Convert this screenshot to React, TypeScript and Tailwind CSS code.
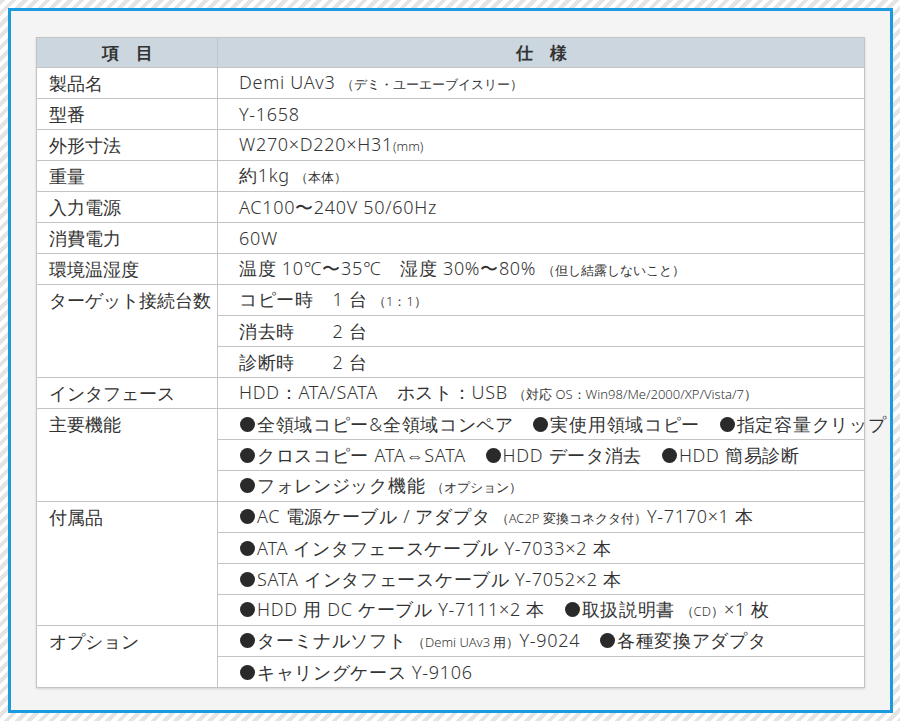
import React from "react";

const S = ({ children }: { children: React.ReactNode }) => (
  <span className="text-[13px] tracking-normal">{children}</span>
);
const B = () => (
  <span className="inline-block w-[15px] h-[15px] rounded-full bg-[#2a2a2a] ml-[1px] mr-[2px] align-[-1px]" />
);

type Row = { label?: string; span?: number; v: React.ReactNode };

const rows: Row[] = [
  { label: "製品名", v: <>Demi UAv3 <S>（デミ・ユーエーブイスリー）</S></> },
  { label: "型番", v: <>Y-1658</> },
  { label: "外形寸法", v: <>W270×D220×H31<S>(mm)</S></> },
  { label: "重量", v: <>約1kg <S>（本体）</S></> },
  { label: "入力電源", v: <>AC100〜240V 50/60Hz</> },
  { label: "消費電力", v: <>60W</> },
  { label: "環境温湿度", v: <>温度 10℃〜35℃　湿度 30%〜80% <S>（但し結露しないこと）</S></> },
  { label: "ターゲット接続台数", span: 3, v: <>コピー時　1 台 <S>（1：1）</S></> },
  { v: <>消去時　　2 台</> },
  { v: <>診断時　　2 台</> },
  { label: "インタフェース", v: <>HDD：ATA/SATA　ホスト：USB <S>（対応 OS：Win98/Me/2000/XP/Vista/7）</S></> },
  { label: "主要機能", span: 3, v: <><B />全領域コピー&amp;全領域コンペア　<B />実使用領域コピー　<B />指定容量クリップ</> },
  { v: <><B />クロスコピー ATA⇔SATA　<B />HDD データ消去　<B />HDD 簡易診断</> },
  { v: <><B />フォレンジック機能 <S>（オプション）</S></> },
  { label: "付属品", span: 4, v: <><B />AC 電源ケーブル / アダプタ <S>（AC2P 変換コネクタ付）</S>Y-7170×1 本</> },
  { v: <><B />ATA インタフェースケーブル Y-7033×2 本</> },
  { v: <><B />SATA インタフェースケーブル Y-7052×2 本</> },
  { v: <><B />HDD 用 DC ケーブル Y-7111×2 本　<B />取扱説明書 <S>（CD）</S>×1 枚</> },
  { label: "オプション", span: 2, v: <><B />ターミナルソフト <S>（Demi UAv3 用）</S>Y-9024　<B />各種変換アダプタ</> },
  { v: <><B />キャリングケース Y-9106</> },
];

export default function App() {
  return (
    <div className="w-[900px] h-[721px] p-[8px] bg-[repeating-linear-gradient(135deg,#e4e4e4_0px,#e4e4e4_4px,#ffffff_4px,#ffffff_8px)] [font-family:'Noto_Sans_CJK_JP','Noto_Sans',sans-serif] text-[#333]">
      <div className="w-[885px] h-[705px] border-[3px] border-[#1a9be0] bg-[#f4f4f4] pl-[25px] pt-[26px]">
        <table className="w-[829px] border-collapse border border-[#c4c4c4] bg-white shadow-[0_1px_2px_rgba(0,0,0,0.15)] table-fixed">
          <colgroup>
            <col className="w-[181px]" />
            <col />
          </colgroup>
          <thead>
            <tr className="h-[30px] bg-[#cbd6df] text-[17px] font-bold">
              <th className="border border-[#c4c4c4] font-bold">項　目</th>
              <th className="border border-[#c4c4c4] font-bold">仕　様</th>
            </tr>
          </thead>
          <tbody>
            {rows.map((r, i) => (
              <tr key={i} className="h-[31px]">
                {r.label !== undefined && (
                  <td rowSpan={r.span ?? 1} className="border border-[#c4c4c4] align-top pl-[12px] pt-[3px] leading-[24px] whitespace-nowrap text-[17.5px]">
                    {r.label}
                  </td>
                )}
                <td className="border border-[#c4c4c4] pl-[21px] leading-[24px] whitespace-nowrap p-0 text-[18px] font-light tracking-[0.7px]">{r.v}</td>
              </tr>
            ))}
          </tbody>
        </table>
      </div>
    </div>
  );
}
